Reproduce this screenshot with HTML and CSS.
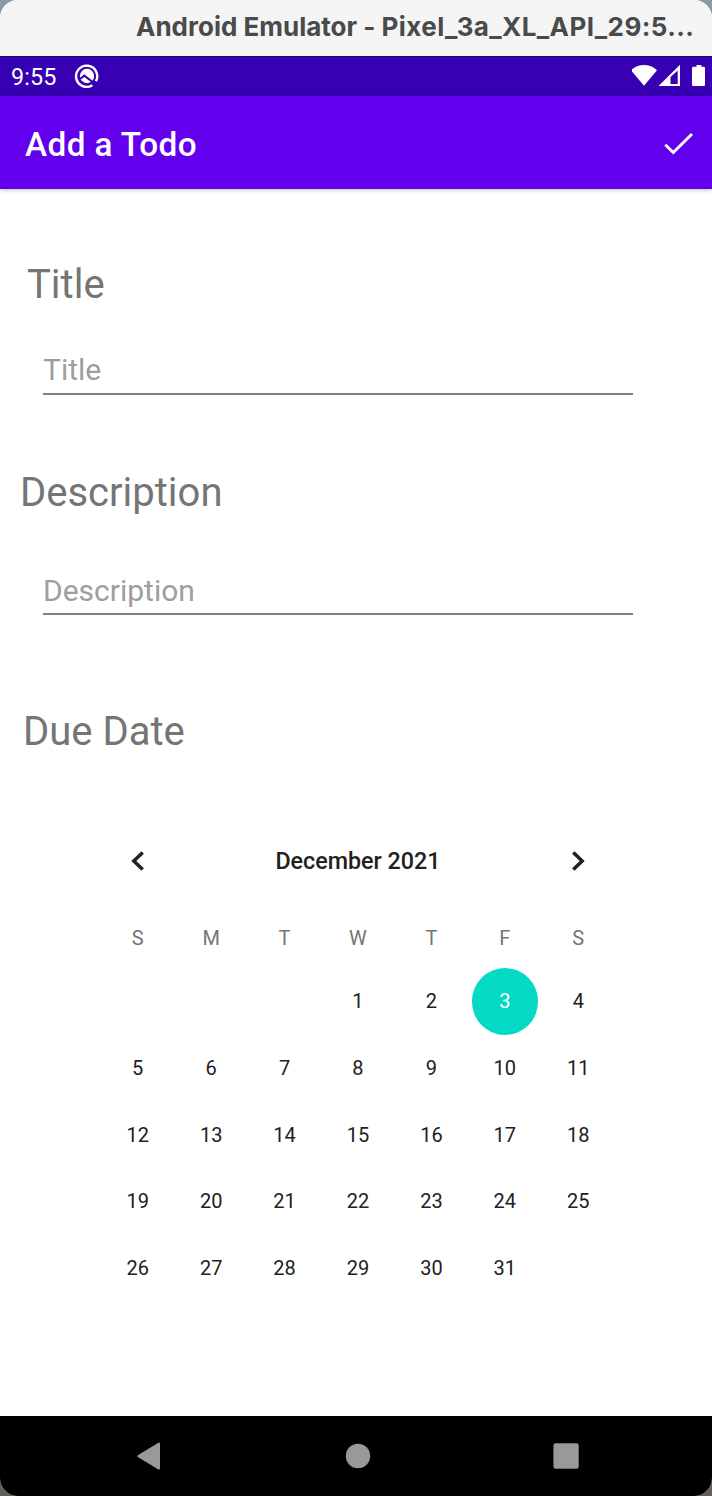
FILE: index.html
```html
<!DOCTYPE html>
<html lang="en">
<head>
<meta charset="utf-8">
<title>Add a Todo</title>
<link rel="stylesheet" href="styles.css">
</head>
<body>
<div class="window">
  <header class="titlebar">Android Emulator - <span class="device">Pixel_3a_XL_API_29:5...</span></header>
  <div class="statusbar">
    <span class="clock">9:55</span>
    <svg class="app-icon" width="26" height="26" viewBox="0 0 26 26">
      <circle cx="13" cy="13" r="7.200" fill="#fff"/>
      <path d="M6 16 10.300 12.600 20.500 20.500" fill="none" stroke="#3700b3" stroke-width="2"/>
      <path d="M22 18.200A10.600 10.600 0 1 0 18.300 22.200" fill="none" stroke="#fff" stroke-width="2.400"/>
    </svg>
    <svg class="signals" width="80" height="40" viewBox="0 0 80 40">
      <path d="M-1 14.200C5.800 7.300 18.200 7.300 25 14.200L12 29.800Z" fill="#fff"/>
      <path d="M26.500 30 48 8.800V30Z" fill="#fff"/>
      <path d="M38.500 28V21L45.700 14.500V28Z" fill="#3700b3"/>
      <path d="M64.500 9h4.800v1.800H71.700q1.300 0 1.300 1.300v16.600q0 1.300-1.300 1.300H61.300q-1.300 0-1.300-1.300V12.100q0-1.300 1.300-1.300H64.500Z" fill="#fff"/>
    </svg>
  </div>
  <div class="appbar">
    <h1 class="appbar-title">Add a Todo</h1>
    <svg class="check" width="30" height="24" viewBox="0 0 30 24"><path d="M1.300 12.800 9.300 20.500 28 2" fill="none" stroke="#fff" stroke-width="2.900"/></svg>
  </div>
  <main class="form">
    <label class="label label-title">Title</label>
    <div class="field field-title">Title</div>
    <label class="label label-desc">Description</label>
    <div class="field field-desc">Description</div>
    <label class="label label-date">Due Date</label>
    <section class="calendar">
      <div class="month-row">
        <svg width="14" height="20" viewBox="0 0 14 20"><path d="M12.700 1.400 3.800 10l8.900 8.600" fill="none" stroke="#212121" stroke-width="3.500"/></svg>
        <h2 class="month">December 2021</h2>
        <svg width="14" height="20" viewBox="0 0 14 20"><path d="M1.300 1.400 10.200 10l-8.900 8.600" fill="none" stroke="#212121" stroke-width="3.500"/></svg>
      </div>
      <div class="week weekdays"><span>S</span><span>M</span><span>T</span><span>W</span><span>T</span><span>F</span><span>S</span></div>
      <div class="week"><span></span><span></span><span></span><span>1</span><span>2</span><span class="selected">3</span><span>4</span></div>
      <div class="week"><span>5</span><span>6</span><span>7</span><span>8</span><span>9</span><span>10</span><span>11</span></div>
      <div class="week"><span>12</span><span>13</span><span>14</span><span>15</span><span>16</span><span>17</span><span>18</span></div>
      <div class="week"><span>19</span><span>20</span><span>21</span><span>22</span><span>23</span><span>24</span><span>25</span></div>
      <div class="week"><span>26</span><span>27</span><span>28</span><span>29</span><span>30</span><span>31</span><span></span></div>
    </section>
  </main>
  <nav class="navbar">
    <svg width="26" height="30" viewBox="0 0 26 30"><path d="M22.400 1.700 1.800 14.200q-1.500.9 0 1.800l20.600 12.400q1.600.6 1.600-1V2.800q0-1.700-1.600-1.100Z" fill="#999"/></svg>
    <svg width="26" height="26" viewBox="0 0 26 26"><circle cx="13" cy="13" r="12.200" fill="#999"/></svg>
    <svg width="26" height="26" viewBox="0 0 26 26"><rect x=".4" y=".2" width="25.300" height="25.600" rx="2.200" fill="#999"/></svg>
  </nav>
</div>
</body>
</html>
```
FILE: styles.css
```css
body {
  margin: 0;
  background: linear-gradient(#8e99a6, #625f5a);
  font-family: Roboto, "Liberation Sans", sans-serif;
}
.window {
  display: flex;
  flex-direction: column;
  height: 1496px;
  border-radius: 18px;
  overflow: hidden;
  background: #fff;
}
.titlebar {
  height: 56px;
  flex: none;
  box-sizing: border-box;
  padding-left: 136px;
  background: #f5f5f5;
  color: #4a4a4a;
  font: 700 26px/54px Inter, sans-serif;
  white-space: nowrap;
}
.device { letter-spacing: .4px; }
.statusbar {
  display: flex;
  align-items: center;
  height: 40px;
  flex: none;
  box-sizing: border-box;
  padding-left: 11px;
  background: #3700b3;
  box-shadow: inset 0 1px #220080;
  color: #fff;
}
.clock {
  width: 63px;
  padding-top: 1px;
  font-size: 23.3px;
  line-height: 40px;
  letter-spacing: .15px;
}
.signals { margin-left: auto; }
.appbar {
  display: flex;
  align-items: center;
  justify-content: space-between;
  height: 93px;
  flex: none;
  box-sizing: border-box;
  padding: 0 18px 0 25px;
  background: #6200ee;
  box-shadow: 0 1px 4px rgba(0, 0, 0, .25);
  color: #fff;
}
.appbar-title {
  margin: 4px 0 0;
  font-size: 33.3px;
  font-weight: 500;
  line-height: 40px;
  letter-spacing: .42px;
}
.check { margin-top: 2px; }
.form {
  display: flex;
  flex-direction: column;
  flex: 1;
  color: #212121;
}
.label {
  font-size: 40px;
  line-height: 48px;
  color: #757575;
}
.label-title { margin: 72px 0 0 27px; }
.label-desc { margin: 74px 0 0 20px; }
.label-date { margin: 93px 0 0 23px; }
.field {
  width: 590px;
  margin-left: 43px;
  border-bottom: 2px solid #808080;
  font-size: 30px;
  line-height: 40px;
  color: #9e9e9e;
}
.field-title { margin-top: 41px; padding-bottom: 3px; }
.field-desc { margin-top: 54px; padding-bottom: 2px; }
.calendar {
  width: 514px;
  margin: 85px 0 0 101px;
}
.month-row {
  display: flex;
  align-items: center;
  justify-content: space-between;
  height: 40px;
  padding: 0 29px;
}
.month {
  margin: 0;
  font-size: 23.3px;
  font-weight: 500;
  line-height: 40px;
}
.week {
  display: grid;
  grid-template-columns: repeat(7, 1fr);
  justify-items: center;
  height: 66.67px;
  font-size: 20px;
  line-height: 66.67px;
}
.weekdays {
  height: 40px;
  margin: 37px 0 10.2px;
  line-height: 40px;
  color: #757575;
}
.selected {
  width: 66.67px;
  border-radius: 50%;
  background: #03dac5;
  color: #fff;
  text-align: center;
}
.navbar {
  display: flex;
  align-items: center;
  justify-content: space-between;
  height: 80px;
  flex: none;
  box-sizing: border-box;
  padding: 0 133px 0 136px;
  background: #000;
}
```
